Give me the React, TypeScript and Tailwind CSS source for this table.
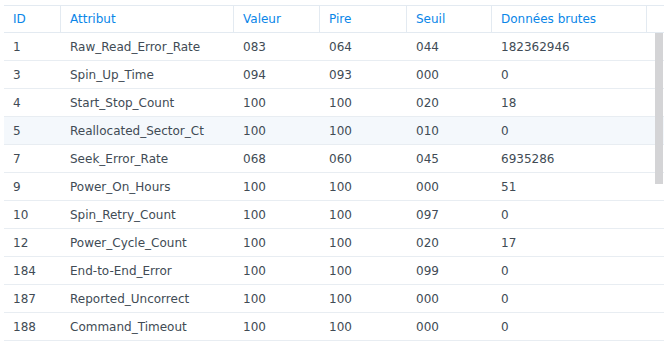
import React from "react";

const rows: [string, string, string, string, string, string][] = [
  ["1", "Raw_Read_Error_Rate", "083", "064", "044", "182362946"],
  ["3", "Spin_Up_Time", "094", "093", "000", "0"],
  ["4", "Start_Stop_Count", "100", "100", "020", "18"],
  ["5", "Reallocated_Sector_Ct", "100", "100", "010", "0"],
  ["7", "Seek_Error_Rate", "068", "060", "045", "6935286"],
  ["9", "Power_On_Hours", "100", "100", "000", "51"],
  ["10", "Spin_Retry_Count", "100", "100", "097", "0"],
  ["12", "Power_Cycle_Count", "100", "100", "020", "17"],
  ["184", "End-to-End_Error", "100", "100", "099", "0"],
  ["187", "Reported_Uncorrect", "100", "100", "000", "0"],
  ["188", "Command_Timeout", "100", "100", "000", "0"],
];

const headers = ["ID", "Attribut", "Valeur", "Pire", "Seuil", "Données brutes", ""];

export default function App() {
  return (
    <div
      className="w-[668px] h-[355px] bg-white overflow-hidden pt-[5px] pl-[4px]"
      style={{ fontFamily: '"DejaVu Sans", Verdana, sans-serif' }}
    >
      <div className="w-[660px] relative">
        <div className="grid grid-cols-[57px_173px_86px_87px_85px_155px_17px] border-t border-b border-[#e3eaf1] h-[28px] text-[12px] text-[#0a86e8]">
          {headers.map((h, i) => (
            <div
              key={i}
              className={`flex items-center pl-[9px] ${i < headers.length - 1 ? "border-r border-[#e3eaf1]" : ""}`}
            >
              {h}
            </div>
          ))}
        </div>
        {rows.map((r, i) => (
          <div
            key={i}
            className={`grid grid-cols-[57px_173px_86px_87px_85px_155px_17px] border-b border-[#e8edf2] h-[28px] text-[12px] text-[#414b55] ${i === 3 ? "bg-[#f4f8fc]" : ""}`}
          >
            {r.map((c, j) => (
              <div key={j} className="flex items-center pl-[9px]">
                {c}
              </div>
            ))}
            <div />
          </div>
        ))}
        <div className="absolute left-[651px] top-[28px] w-[8px] h-[151px] bg-[#d4d4d6]" />
      </div>
    </div>
  );
}
